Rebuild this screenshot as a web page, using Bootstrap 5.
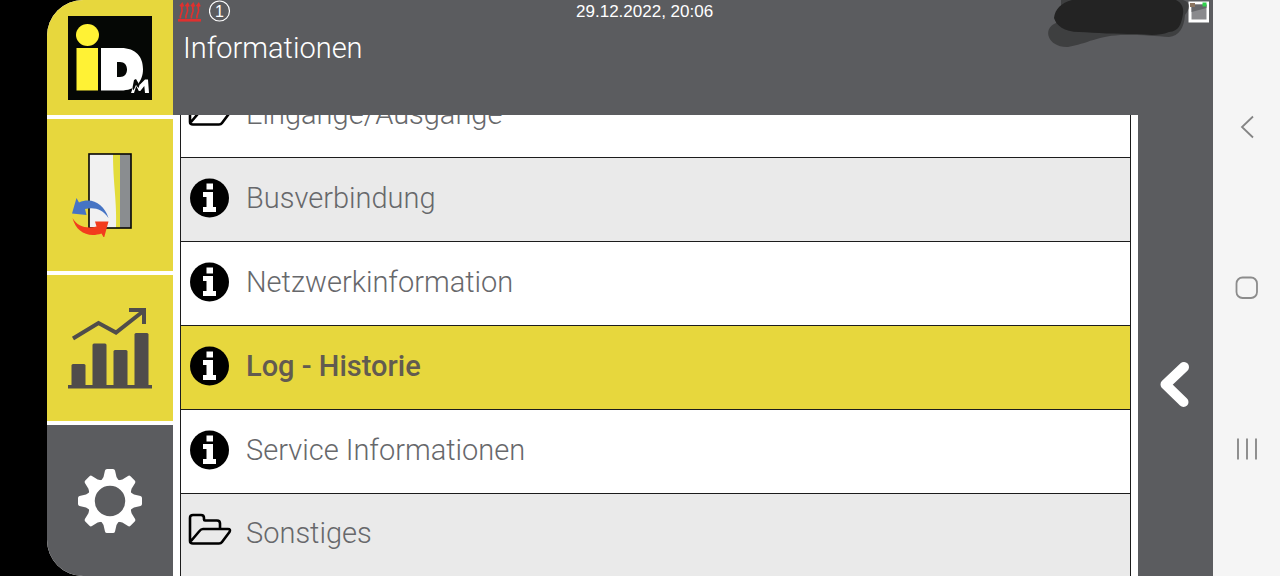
<!DOCTYPE html>
<html lang="de">
<head>
<meta charset="utf-8">
<meta name="viewport" content="width=device-width, initial-scale=1">
<title>Informationen</title>
<link href="https://cdn.jsdelivr.net/npm/bootstrap@5.3.0/dist/css/bootstrap.min.css" rel="stylesheet">
<style>
  :root { --idm-yellow: #e7d73d; --idm-gray: #5b5c5f; }
  body { font-family: Roboto, "Liberation Sans", Arial, sans-serif; background: #000; }
  svg { display: block; }
  .bezel { width: 47px; }
  .shell { border-radius: 36px 0 0 36px; background: #fff; }
  .side-nav { width: 126px; gap: 4px; }
  .side-nav a { background: var(--idm-yellow); flex: 152 1 0; }
  .side-nav a.tile-logo { flex: 0 0 115px; }
  .side-nav a.tile-chart { flex-grow: 146; }
  .side-nav a.tile-settings { background: var(--idm-gray); flex-grow: 151; }
  .app-main { background: var(--idm-gray); }
  .top-bar { height: 115px; color: #fff; }
  .status-row { display: grid; grid-template-columns: 100fr auto 124fr; height: 24px; }
  .status-date { font: 400 17px/24px "Liberation Sans", Arial, sans-serif; }
  .page-title { font-size: 29px; line-height: 48px; font-weight: 300; margin: 0 0 0 10px; }
  .list-pane { background: #fff; padding: 0 7px; }
  .info-list { border: 1px solid #1c1c1c; border-width: 0 1px; border-radius: 0; }
  .info-list .list-group-item {
    flex: 0 0 84px; border: 0; border-bottom: 1px solid #1c1c1c; border-radius: 0; margin: 0; gap: 14px; padding: 0 7px 4px;
    color: #67686b; font-size: 29px; line-height: 36px; font-weight: 300; background: #fff;
  }
  .info-list .list-group-item:nth-child(even) { background: #eaeaea; }
  .info-list .list-group-item:last-child { flex-basis: 82px; border-bottom: 0; }
  .info-list .list-group-item + .list-group-item.active { background: var(--idm-yellow); color: #625b50; font-weight: 500; margin-top: 0; border-top-width: 0; }
  .back-col { width: 75px; padding: 78px 2px 0 0; }
  .phone-bar { width: 67px; background: #f5f5f5; }
  .phone-bar .btn { width: 67px; height: 161px; }
</style>
</head>
<body>
<div class="d-flex vh-100 overflow-hidden">
  <div class="bezel flex-shrink-0"></div>
  <div class="shell d-flex flex-grow-1 overflow-hidden">

    <nav class="side-nav d-flex flex-column flex-shrink-0" aria-label="Hauptmenü">
      <a href="#" class="tile-logo d-flex align-items-center justify-content-center" aria-label="Start">
        <svg width="84" height="84" viewBox="0 0 84 84">
          <rect width="84" height="84" fill="#050705"/>
          <ellipse cx="19.500" cy="19" rx="11.500" ry="11" fill="#fff235"/>
          <rect x="8.500" y="32" width="21.500" height="42.500" fill="#fff235"/>
          <path d="M33 32h20c15 0 22 9 22 21 0 13-8 21.500-22 21.500H33zM49 46v15h3c4.500 0 7-3 7-7.500s-2.500-7.500-7-7.500z" fill="#fff" fill-rule="evenodd"/>
          <path d="M67.500 63.500l4 5.500 5.500-5.500h3L81 77h-4l-.7-7-4 5h-1.500l-2.500-5-2.300 7h-3z" fill="#fff"/>
          <path d="M66 64l2-1 3.500 6-1 3-2.500-3-2.500 5.500-1-3z" fill="#050705"/>
        </svg>
      </a>
      <a href="#" class="d-flex align-items-center justify-content-center" aria-label="Wärmepumpe">
        <svg width="84" height="84" viewBox="0 0 84 84">
          <rect x="21" y="1" width="42" height="74" fill="#f1f1f1"/>
          <path d="M45 1h8v74h-5c1-28-3-44-3-74z" fill="#e3dc3b"/>
          <rect x="52" y="1" width="11" height="74" fill="#8a8d90"/>
          <rect x="21" y="1" width="42" height="74" fill="none" stroke="#050505" stroke-width="1.600"/>
          <path d="M8.500 45l2.500 4.500C24 44 36 51 40.500 65 34 56 27 54 17 56l1.500 6L4 60.500z" fill="#4674c4"/>
          <path d="M4.500 65c5 9 15 11 24 8.500l-1.500-5 13.500 0-4.500 16.500-2.500-4.500C20 85 8 79 4.500 65z" fill="#f23c1d"/>
        </svg>
      </a>
      <a href="#" class="tile-chart d-flex align-items-center justify-content-center" aria-label="Statistik">
        <svg width="84" height="84" viewBox="0 0 84 84" fill="#504d4b">
          <path d="M0 79h84v3.500H0z"/>
          <rect x="3.500" y="58" width="14" height="24" rx="1.500"/>
          <rect x="24.500" y="37.500" width="14" height="44" rx="1.500"/>
          <rect x="45.500" y="44" width="14" height="38" rx="1.500"/>
          <rect x="66.500" y="27" width="14" height="55" rx="1.500"/>
          <path d="M5 32.500l25.500-15.500L48 26.500 75.500 5M61 4h15V18" fill="none" stroke="#504d4b" stroke-width="4"/>
        </svg>
      </a>
      <a href="#" class="tile-settings d-flex align-items-center justify-content-center" aria-label="Einstellungen">
        <svg width="66" height="66" viewBox="-33 -33 66 66" fill="#fff">
          <defs><path id="tooth" d="M-9-20l2.500-4 1.500-6.500q.4-1.500 2-1.500h6q1.600 0 2 1.500L6.500-24 9-20z"/></defs>
          <use href="#tooth"/><use href="#tooth" transform="rotate(45)"/><use href="#tooth" transform="rotate(90)"/><use href="#tooth" transform="rotate(135)"/>
          <use href="#tooth" transform="rotate(180)"/><use href="#tooth" transform="rotate(225)"/><use href="#tooth" transform="rotate(270)"/><use href="#tooth" transform="rotate(315)"/>
          <circle r="19" fill="none" stroke="#fff" stroke-width="7.500"/>
        </svg>
      </a>
    </nav>

    <main class="app-main d-flex flex-column flex-grow-1">
      <header class="top-bar flex-shrink-0">
        <div class="status-row">
          <div class="d-flex gap-2 ps-1">
            <svg width="24" height="23" viewBox="0 0 24 23" fill="none" stroke="#e0302f">
              <path d="M1 20.300h23" stroke-width="2.600"/>
              <path id="flame" d="M3.500 18.500c-1.500-3.500 2.500-5.500 1.500-9C4.300 7.500 5 6 5 4M3 6.200L5.200 3.500 6.500 6.500" stroke-width="1.700"/>
              <use href="#flame" x="5.500"/><use href="#flame" x="11"/><use href="#flame" x="16.500"/>
            </svg>
            <svg width="22" height="23" viewBox="0 0 22 23">
              <circle cx="10.500" cy="11" r="10" fill="none" stroke="#fff" stroke-width="1.200"/>
              <text x="10.500" y="17" text-anchor="middle" font-family="Liberation Sans" font-size="16" fill="#fff">1</text>
            </svg>
          </div>
          <time class="status-date" datetime="2022-12-29T20:06">29.12.2022, 20:06</time>
          <div class="d-flex justify-content-end pe-1">
            <svg width="163" height="24" viewBox="1046 0 163 24" overflow="visible">
              <path d="M1188.500 1.500h20.500v21h-20.500z" fill="#fff"/>
              <path d="M1191.500 4.500h15v15h-15z" fill="#8a8a8d"/>
              <path d="M1191.500 12l15-4v-3.500h-15z" fill="#66676a"/>
              <path d="M1202.500 2.500h4v4h-4z" fill="#2ed04a"/>
              <path d="M1190 3h5v4h-5z" fill="#8a7460"/>
              <path d="M1061 0h122c8 2 7 9 2 15-1 13-6 21-16 22-12-1-25-2-44-2-27 0-38 9-57 12-19 1-27-18-12-24l5-12c0-5 0-8 0-11z" fill="#3a3a3b" opacity=".85"/>
              <path d="M1072 0h104c6 3 8 8 7 14-2 11-4 17-14 18-10 4-20 3-32 2-22 0-40-1-58-2-15 0-23-7-25-14 1-9 7-15 18-18z" fill="#232323"/>
            </svg>
          </div>
        </div>
        <h1 class="page-title">Informationen</h1>
      </header>

      <div class="d-flex flex-grow-1 overflow-hidden">
        <div class="list-pane d-flex flex-grow-1">
          <div class="info-list list-group flex-grow-1 overflow-hidden justify-content-end">
            <a href="#" class="list-group-item d-flex align-items-center">
              <svg width="44" height="40" viewBox="0 0 44 40"><use href="#folder"/></svg>Eingänge/Ausgänge
            </a>
            <a href="#" class="list-group-item d-flex align-items-center">
              <svg width="44" height="40" viewBox="0 0 44 40"><use href="#info"/></svg>Busverbindung
            </a>
            <a href="#" class="list-group-item d-flex align-items-center">
              <svg width="44" height="40" viewBox="0 0 44 40"><use href="#info"/></svg>Netzwerkinformation
            </a>
            <a href="#" class="list-group-item active d-flex align-items-center" aria-current="true">
              <svg width="44" height="40" viewBox="0 0 44 40"><use href="#info"/></svg>Log - Historie
            </a>
            <a href="#" class="list-group-item d-flex align-items-center">
              <svg width="44" height="40" viewBox="0 0 44 40"><use href="#info"/></svg>Service Informationen
            </a>
            <a href="#" class="list-group-item d-flex align-items-center">
              <svg width="44" height="40" viewBox="0 0 44 40"><use href="#folder"/></svg>Sonstiges
            </a>
          </div>
        </div>
        <div class="back-col flex-shrink-0 d-flex align-items-center justify-content-center">
          <button type="button" class="btn p-0 border-0" aria-label="Zurück">
            <svg width="30" height="46" viewBox="0 0 30 46"><path d="M24 5L5.500 22.500 23.500 40" fill="none" stroke="#fff" stroke-width="10" stroke-linecap="round" stroke-linejoin="round"/></svg>
          </button>
        </div>
      </div>
    </main>
  </div>

  <div class="phone-bar flex-shrink-0 d-flex flex-column justify-content-center" role="toolbar" aria-label="Systemnavigation">
    <button type="button" class="btn p-0 border-0 d-flex align-items-center justify-content-center" aria-label="Zurück">
      <svg width="24" height="24" viewBox="0 0 24 24"><path d="M18 1.500L7 12l11 10.500" fill="none" stroke="#858585" stroke-width="1.800"/></svg>
    </button>
    <button type="button" class="btn p-0 border-0 d-flex align-items-center justify-content-center" aria-label="Startbildschirm">
      <svg width="24" height="24" viewBox="0 0 24 24"><rect x="1.500" y="1.500" width="20.500" height="20.500" rx="6" fill="none" stroke="#8c8c8c" stroke-width="1.800"/></svg>
    </button>
    <button type="button" class="btn p-0 border-0 d-flex align-items-center justify-content-center" aria-label="Letzte Apps">
      <svg width="24" height="24" viewBox="0 0 24 24"><path d="M3 1.500v21M12 1.500v21M21 1.500v21" fill="none" stroke="#858585" stroke-width="1.800"/></svg>
    </button>
  </div>
</div>

<svg width="0" height="0" class="position-absolute" aria-hidden="true">
  <defs>
    <g id="info">
      <circle cx="21.500" cy="20" r="19.500" fill="#000"/>
      <path d="M18.500 5.500h6.500v6h-6.500zM15 14h10v15h3v5H15v-5h3.500v-10H15z" fill="#fff"/>
    </g>
    <path id="folder" d="M2 28V5q0-3 3-3h8q3 0 3 3v1.500q0 1 1 1h12q3 0 3 3V16M2 28q0 2.500 3 2.500h26q2 0 3-1.500l7.500-10q1.500-3-1.500-3H15q-2 0-3.500 2L3 28" fill="none" stroke="#000" stroke-width="2.600" stroke-linejoin="round"/>
  </defs>
</svg>
<script src="https://cdn.jsdelivr.net/npm/bootstrap@5.3.0/dist/js/bootstrap.bundle.min.js"></script>
</body>
</html>
